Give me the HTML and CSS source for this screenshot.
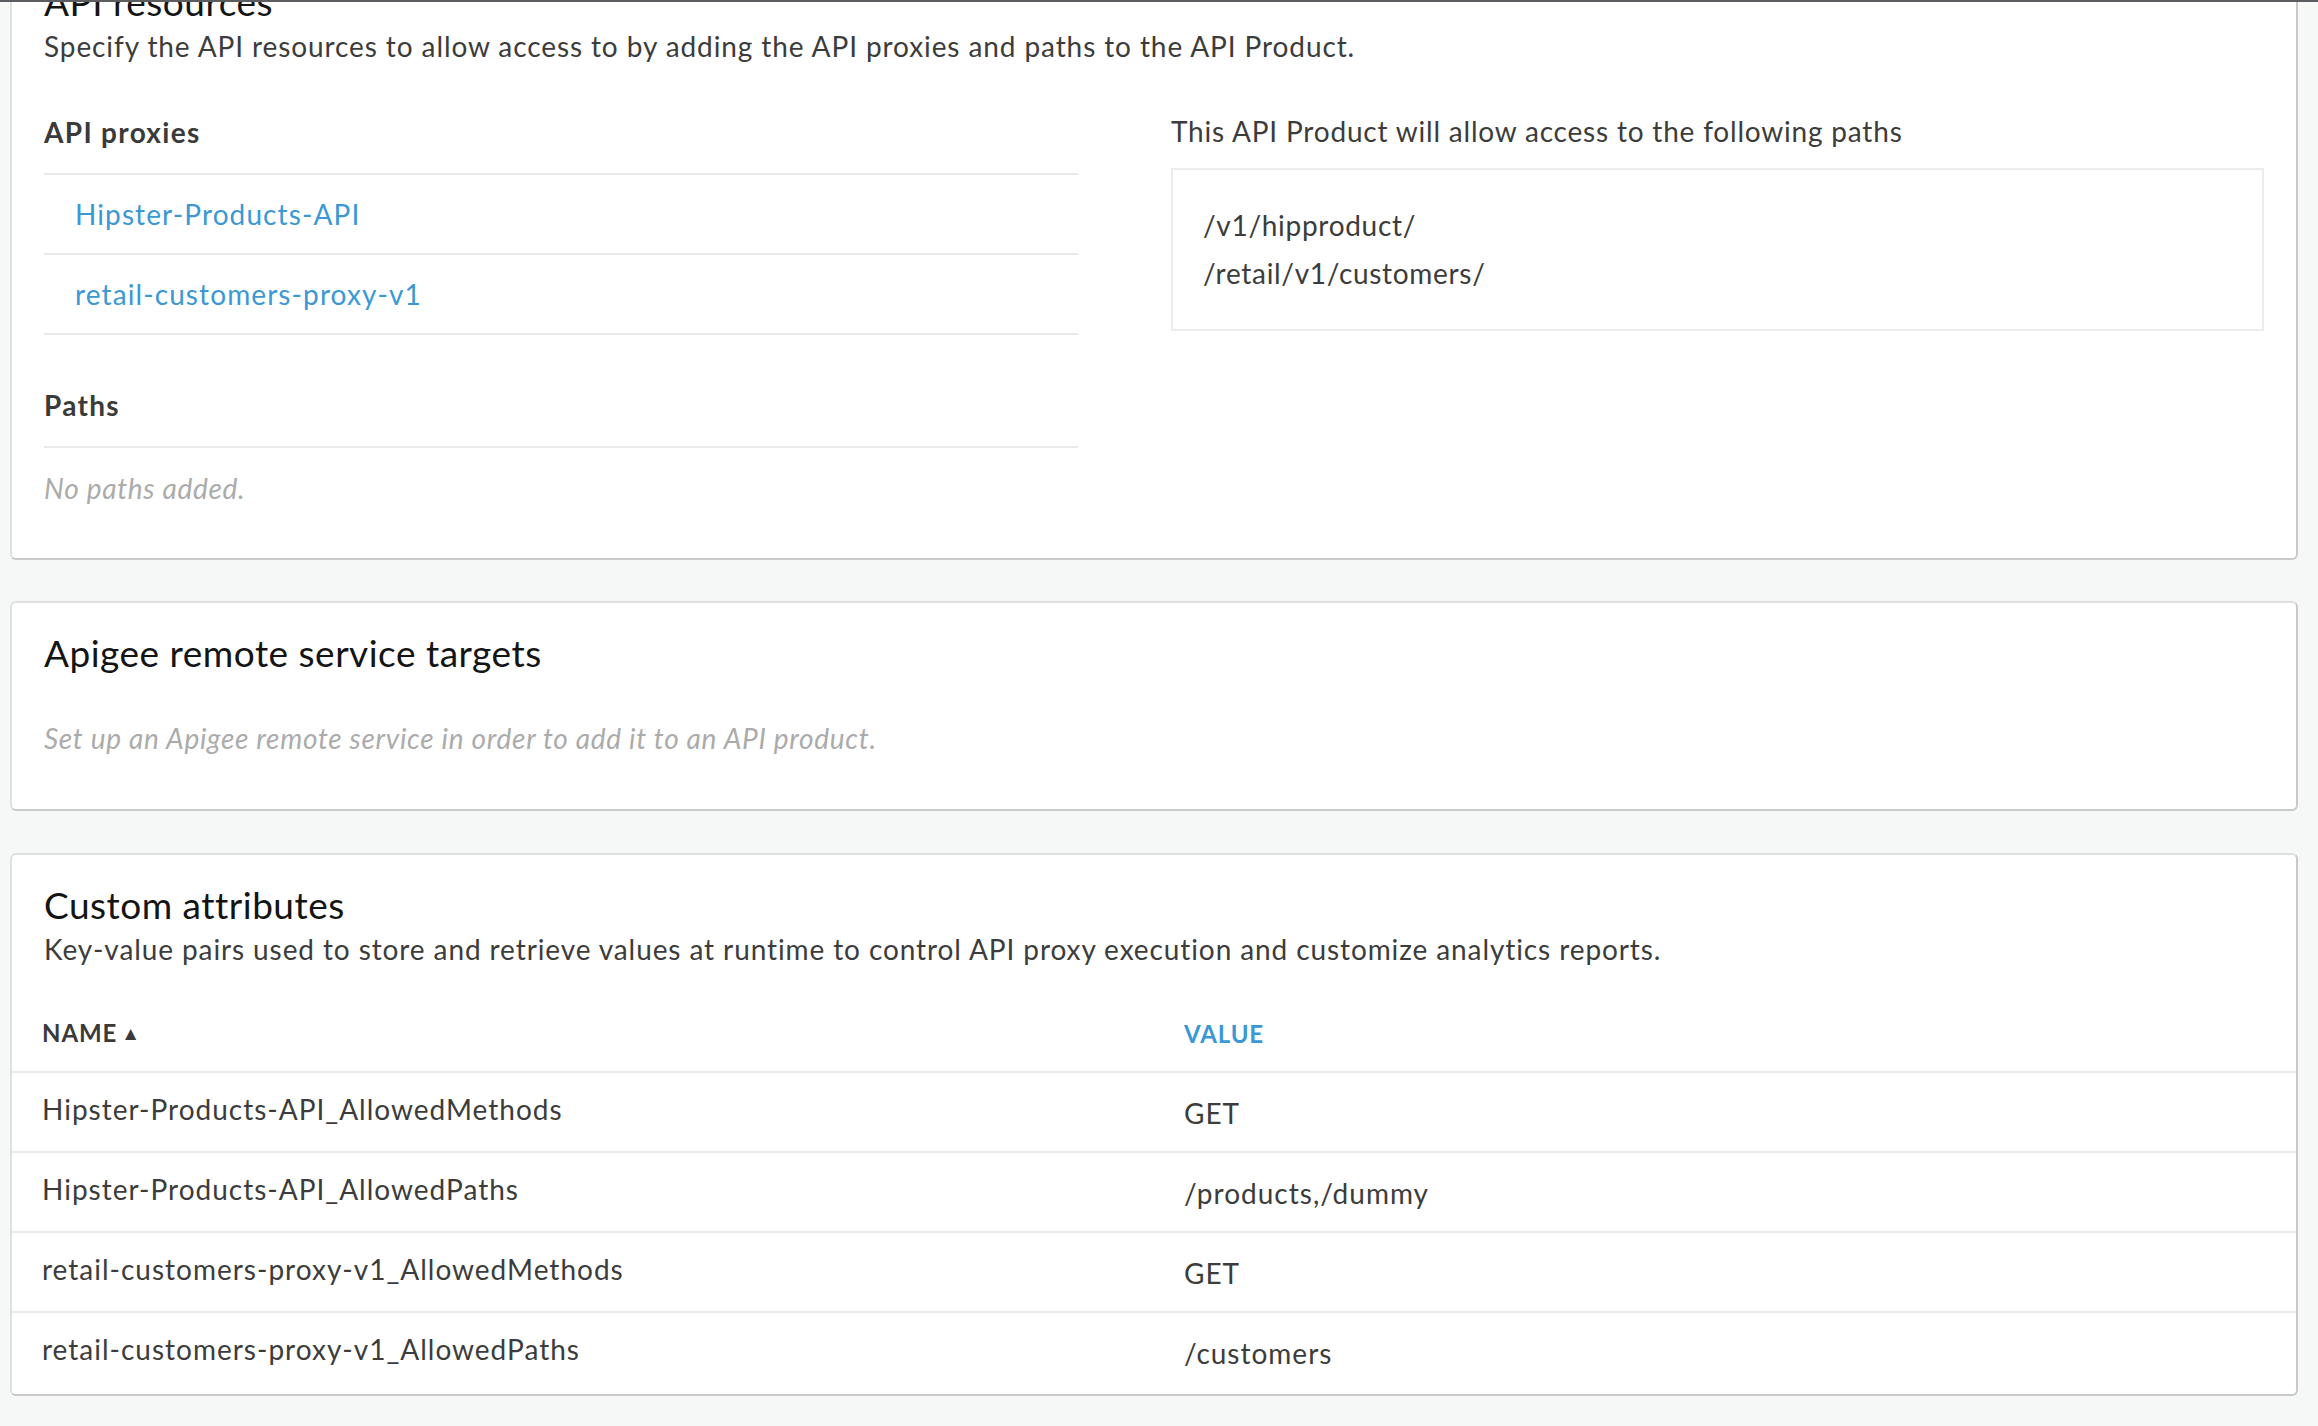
FILE: index.html
```html
<!DOCTYPE html>
<html lang="en">
<head>
<meta charset="utf-8">
<title>API Product</title>
<link rel="stylesheet" href="styles.css">
</head>
<body>
<div class="topbar"></div>
<main class="page">
  <section class="card card-cut">
    <h2 class="card-title">API resources</h2>
    <p class="card-desc">Specify the API resources to allow access to by adding the API proxies and paths to the API Product.</p>
    <div class="resources">
      <div class="res-left">
        <div class="sub-label">API proxies</div>
        <ul class="res-list">
          <li class="res-item"><a class="link" href="#">Hipster-Products-API</a></li>
          <li class="res-item"><a class="link" href="#">retail-customers-proxy-v1</a></li>
        </ul>
        <div class="sub-label sub-label-paths">Paths</div>
        <p class="empty-note">No paths added.</p>
      </div>
      <div class="res-right">
        <div class="paths-title">This API Product will allow access to the following paths</div>
        <div class="paths-box">
          <div class="path-line">/v1/hipproduct/</div>
          <div class="path-line">/retail/v1/customers/</div>
        </div>
      </div>
    </div>
  </section>

  <section class="card card-pad">
    <h2 class="card-title">Apigee remote service targets</h2>
    <p class="empty-note remote-note">Set up an Apigee remote service in order to add it to an API product.</p>
  </section>

  <section class="card">
    <div class="card-head">
      <h2 class="card-title">Custom attributes</h2>
      <p class="card-desc">Key-value pairs used to store and retrieve values at runtime to control API proxy execution and customize analytics reports.</p>
    </div>
    <table class="attr-table">
      <thead>
        <tr>
          <th class="th-name">NAME<span class="sort-arrow">&#9650;</span></th>
          <th class="th-value">VALUE</th>
        </tr>
      </thead>
      <tbody>
        <tr><td class="td-name">Hipster-Products-API_AllowedMethods</td><td class="td-value">GET</td></tr>
        <tr><td class="td-name">Hipster-Products-API_AllowedPaths</td><td class="td-value">/products,/dummy</td></tr>
        <tr><td class="td-name">retail-customers-proxy-v1_AllowedMethods</td><td class="td-value">GET</td></tr>
        <tr><td class="td-name">retail-customers-proxy-v1_AllowedPaths</td><td class="td-value">/customers</td></tr>
      </tbody>
    </table>
  </section>
</main>
</body>
</html>
```

FILE: styles.css
```css
html, body {
  margin: 0;
  padding: 0;
}
body {
  background: #f6f7f7;
  font-family: Lato, "Open Sans", "Liberation Sans", sans-serif;
  color: #3a3a3a;
  overflow: hidden;
  height: 1426px;
  position: relative;
}
.topbar {
  position: absolute;
  top: 0;
  left: 0;
  right: 0;
  height: 2px;
  background: #5c5d60;
  z-index: 5;
}
.page {
  padding: 0 20px 0 10px;
}
.card {
  background: #fff;
  border: 2px solid #e0e0e0;
  border-right-color: #c9c9c9;
  border-bottom-color: #c9c9c9;
  border-radius: 6px;
  margin-bottom: 42px;
}
.card-cut {
  margin-top: -54px;
  margin-bottom: 41px;
  padding: 30px 32px 50px 32px;
}
.card-pad {
  padding: 26px 32px 51px 32px;
}
.card-head {
  padding: 26px 32px 0 32px;
}
.card-title {
  margin: 0;
  font-size: 37px;
  line-height: 48px;
  font-weight: 400;
  color: #141414;
  letter-spacing: 0.5px;
}
.card-desc {
  margin: 0;
  font-size: 28px;
  line-height: 40px;
  color: #3c3c3c;
  letter-spacing: 0.9px;
}
.resources {
  display: grid;
  grid-template-columns: 1034px 1fr;
  column-gap: 93px;
  margin-top: 46px;
}
.res-right {
  margin-top: -1px;
}
.sub-label {
  font-size: 28px;
  line-height: 40px;
  font-weight: 700;
  color: #3a3a3a;
  letter-spacing: 1.3px;
  padding-bottom: 21px;
  border-bottom: 2px solid #e9e9e9;
}
.sub-label-paths {
  margin-top: 50px;
}
.res-list {
  list-style: none;
  margin: 0;
  padding: 0;
}
.res-item {
  box-sizing: border-box;
  height: 80px;
  display: flex;
  align-items: center;
  padding-left: 31px;
  padding-bottom: 1px;
  border-bottom: 2px solid #e9e9e9;
}
.link {
  font-size: 28px;
  color: #3b98d4;
  text-decoration: none;
  letter-spacing: 1.1px;
}
.empty-note {
  margin: 20px 0 0 0;
  font-size: 28px;
  line-height: 40px;
  font-style: italic;
  color: #ababab;
  letter-spacing: 0.7px;
}
.remote-note {
  margin-top: 41px;
}
.paths-title {
  font-size: 28px;
  line-height: 40px;
  color: #3c3c3c;
  letter-spacing: 0.8px;
}
.paths-box {
  margin-top: 17px;
  border: 2px solid #ececec;
  padding: 31px 30px 32px 30px;
}
.path-line {
  font-size: 28px;
  line-height: 48px;
  color: #3c3c3c;
  letter-spacing: 0.7px;
}
.attr-table {
  width: 100%;
  border-collapse: collapse;
  margin-top: 22px;
  margin-bottom: 3px;
  table-layout: fixed;
}
.attr-table th {
  text-align: left;
  font-size: 24px;
  font-weight: 700;
  line-height: 40px;
  padding: 22px 30px 16px 30px;
  vertical-align: middle;
  border-bottom: 2px solid #e9e9e9;
  letter-spacing: 0.9px;
}
.th-name {
  color: #3a3a3a;
}
.sort-arrow {
  font-size: 19px;
  margin-left: 4px;
  position: relative;
  top: -2px;
}
.th-value {
  color: #3b98d4;
}
.attr-table td {
  font-size: 28px;
  line-height: 40px;
  color: #3c3c3c;
  border-bottom: 2px solid #e9e9e9;
  vertical-align: top;
  letter-spacing: 1px;
}
.attr-table tbody tr:last-child td {
  border-bottom: none;
}
.td-name {
  padding: 16px 30px 22px 30px;
}
.td-value {
  padding: 20px 30px 18px 30px;
}
```
